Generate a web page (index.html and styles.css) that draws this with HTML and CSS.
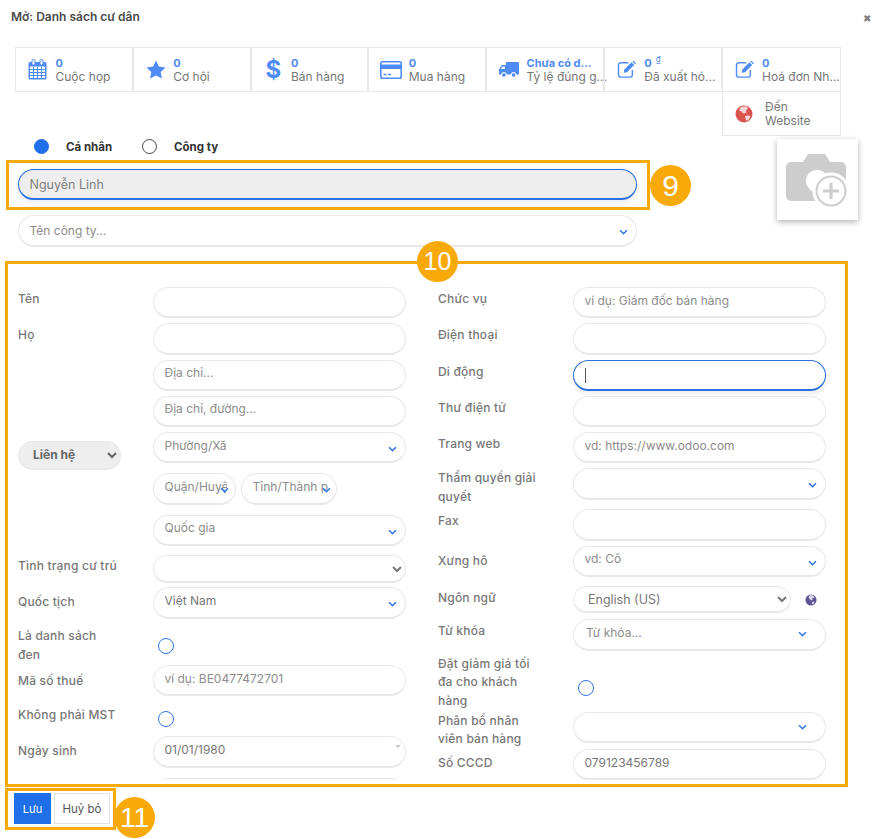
FILE: index.html
```html
<!DOCTYPE html>
<html lang="vi">
<head>
<meta charset="utf-8">
<title>Mở: Danh sách cư dân</title>
<link rel="stylesheet" href="styles.css">
</head>
<body>
<div class="modal">
  <header class="modal-head">
    <h4 class="modal-title">Mở: Danh sách cư dân</h4>
    <span class="close">✖</span>
  </header>

  <div class="stats">
    <div class="stat"><span class="stat-icon"><svg width="19" height="21" viewBox="0 0 19 21"><rect x=".5" y="3" width="18" height="17.5" rx="1.5" fill="#4f8bf5"/><rect x="2" y="7.5" width="15" height="11.5" fill="#fff"/><path d="M2 10.5h15M2 13.5h15M2 16.5h15M5.5 7.5V19M9.5 7.5V19M13.5 7.5V19" stroke="#4f8bf5" stroke-width="1"/><rect x="4" y=".5" width="3" height="5.5" rx="1.4" fill="#fff" stroke="#4f8bf5"/><rect x="12" y=".5" width="3" height="5.5" rx="1.4" fill="#fff" stroke="#4f8bf5"/></svg></span><div class="stat-text"><b>0</b><span>Cuộc họp</span></div></div>
    <div class="stat"><span class="stat-icon"><svg width="20" height="19" viewBox="0 0 20 19"><path d="M10 .5l2.9 6 6.6.9-4.8 4.6 1.2 6.5L10 15.4l-5.9 3.1 1.2-6.5L.5 7.4l6.6-.9z" fill="#4f8bf5"/></svg></span><div class="stat-text"><b>0</b><span>Cơ hội</span></div></div>
    <div class="stat"><span class="stat-icon"><span class="dollar">$</span></span><div class="stat-text"><b>0</b><span>Bán hàng</span></div></div>
    <div class="stat"><span class="stat-icon"><svg width="22" height="18" viewBox="0 0 22 18"><rect x=".8" y=".8" width="20.4" height="16.4" rx="1.8" fill="#fff" stroke="#4f8bf5" stroke-width="1.6"/><rect x="1" y="3.5" width="20" height="4.5" fill="#4f8bf5"/><path d="M3.5 13.5h3M8 13.5h3" stroke="#4f8bf5" stroke-width="1.6"/></svg></span><div class="stat-text"><b>0</b><span>Mua hàng</span></div></div>
    <div class="stat"><span class="stat-icon"><svg width="20" height="16" viewBox="0 0 20 16"><path d="M7 0h12a1 1 0 0 1 1 1v11.500h-2.500a3 3 0 0 0-5.800 0H7.800a3 3 0 0 0-5.800 0H0V7l3-4h4z" fill="#4f8bf5"/><path d="M1.700 7l2-2.500H6V7z" fill="#fff"/><circle cx="4.900" cy="13" r="2.300" fill="#4f8bf5" stroke="#fff"/><circle cx="14.600" cy="13" r="2.300" fill="#4f8bf5" stroke="#fff"/></svg></span><div class="stat-text"><b>Chưa có d...</b><span>Tỷ lệ đúng g...</span></div></div>
    <div class="stat"><span class="stat-icon"><svg class="edit" width="20" height="17" viewBox="0 1 21 19"><path d="M12 3H3.500A2.500 2.500 0 0 0 1 5.500v11A2.500 2.500 0 0 0 3.500 19h10.500a2.500 2.500 0 0 0 2.500-2.500V11" fill="none" stroke="#4f8bf5" stroke-width="1.600"/><path d="M7.500 10.500L15.500 2.500l3 3-8 8-3.700.7z" fill="#4f8bf5"/><path d="M16.500 1.500l1-1 3 3-1 1z" fill="#4f8bf5"/></svg></span><div class="stat-text"><b>0<sup class="cur">₫</sup></b><span>Đã xuất hó...</span></div></div>
    <div class="stat"><span class="stat-icon"><svg class="edit" width="20" height="17" viewBox="0 1 21 19"><path d="M12 3H3.500A2.500 2.500 0 0 0 1 5.500v11A2.500 2.500 0 0 0 3.500 19h10.500a2.500 2.500 0 0 0 2.500-2.500V11" fill="none" stroke="#4f8bf5" stroke-width="1.600"/><path d="M7.500 10.500L15.500 2.500l3 3-8 8-3.700.7z" fill="#4f8bf5"/><path d="M16.500 1.500l1-1 3 3-1 1z" fill="#4f8bf5"/></svg></span><div class="stat-text"><b>0</b><span>Hoá đơn Nh...</span></div></div>
    <div class="stat stat-web"><span class="stat-icon"><svg width="18" height="18" viewBox="0 0 18 18"><circle cx="9" cy="9" r="8.500" fill="#d9534f"/><path d="M6 1.500c2 .5 4-.3 6 .2l1 2-2 1.500.5 2-2.500 1.500-1.500-1-1.500-1.500-2-.5L5 3.500zM10 11l3-.5 2.500.5-1.500 3.500-2.500 1.500-1-2.500z" fill="#f5d5d3"/></svg></span><div class="stat-text wrap"><span>Đến Website</span></div></div>
  </div>

  <section class="identity">
    <div class="identity-main">
      <div class="kind">
        <span class="kind-opt"><i class="dot dot-on"></i><b>Cá nhân</b></span>
        <span class="kind-opt"><i class="dot"></i><b>Công ty</b></span>
      </div>
      <div class="field name-field"><input class="input input-name" value="Nguyễn Linh"></div>
      <div class="field"><input class="input input-company" placeholder="Tên công ty..."><svg class="chev" viewBox="0 0 10 7"><path d="M1 1.500l4 4 4-4" fill="none" stroke="#2f74e6" stroke-width="1.800"/></svg></div>
    </div>
    <div class="photo"><svg width="64" height="56" viewBox="0 0 64 56"><path d="M5 9h12l5-8h17l5 8h11a5 5 0 0 1 5 5v29a5 5 0 0 1-5 5H5a5 5 0 0 1-5-5V14a5 5 0 0 1 5-5z" fill="#cdcdcd"/><circle cx="31" cy="28" r="11" fill="#fff"/><circle cx="45" cy="38" r="17" fill="#cdcdcd" stroke="#fff" stroke-width="3"/><circle cx="45" cy="38" r="13.500" fill="#fff"/><path d="M45 30v16M37 38h16" stroke="#cdcdcd" stroke-width="3.200"/></svg></div>
  </section>

  <form class="form-scroll">
    <div class="col">
      <div class="row"><label>Tên</label><div class="field"><input class="input"></div></div>
      <div class="row"><label>Họ</label><div class="field"><input class="input"></div></div>
      <div class="row row-address">
        <div class="addr-type"><select class="select select-type"><option>Liên hệ</option></select></div>
        <div class="addr-fields">
          <div class="field"><input class="input" placeholder="Địa chỉ..."></div>
          <div class="field"><input class="input" placeholder="Địa chỉ, đường..."></div>
          <div class="field"><input class="input" placeholder="Phường/Xã"><svg class="chev" viewBox="0 0 10 7"><path d="M1 1.500l4 4 4-4" fill="none" stroke="#2f74e6" stroke-width="1.800"/></svg></div>
          <div class="addr-split">
            <div class="field district"><input class="input" placeholder="Quận/Huyện"><svg class="chev" viewBox="0 0 10 7"><path d="M1 1.500l4 4 4-4" fill="none" stroke="#2f74e6" stroke-width="1.800"/></svg></div>
            <div class="field city"><input class="input" placeholder="Tỉnh/Thành phố"><svg class="chev" viewBox="0 0 10 7"><path d="M1 1.500l4 4 4-4" fill="none" stroke="#2f74e6" stroke-width="1.800"/></svg></div>
          </div>
          <div class="field"><input class="input" placeholder="Quốc gia"><svg class="chev" viewBox="0 0 10 7"><path d="M1 1.500l4 4 4-4" fill="none" stroke="#2f74e6" stroke-width="1.800"/></svg></div>
        </div>
      </div>
      <div class="row row-status"><label>Tình trạng cư trú</label><select class="select select-status"><option></option></select></div>
      <div class="row row-nation"><label>Quốc tịch</label><div class="field"><input class="input" value="Việt Nam"><svg class="chev" viewBox="0 0 10 7"><path d="M1 1.500l4 4 4-4" fill="none" stroke="#2f74e6" stroke-width="1.800"/></svg></div></div>
      <div class="row row-check row-blacklist"><label>Là danh sách<br>đen</label><i class="check"></i></div>
      <div class="row row-tax"><label>Mã số thuế</label><div class="field"><input class="input" placeholder="ví dụ: BE0477472701"></div></div>
      <div class="row row-check row-nomst"><label>Không phải MST</label><i class="check"></i></div>
      <div class="row row-birth"><label>Ngày sinh</label><div class="field"><input class="input" value="01/01/1980"><i class="spin"></i></div></div>
      <div class="row"><label></label><div class="field"><input class="input"></div></div>
    </div>

    <div class="col">
      <div class="row"><label>Chức vụ</label><div class="field"><input class="input" placeholder="ví dụ: Giám đốc bán hàng"></div></div>
      <div class="row"><label>Điện thoại</label><div class="field"><input class="input"></div></div>
      <div class="row"><label>Di động</label><div class="field"><input class="input input-focus"><i class="caret"></i></div></div>
      <div class="row"><label>Thư điện tử</label><div class="field"><input class="input"></div></div>
      <div class="row"><label>Trang web</label><div class="field"><input class="input" placeholder="vd: https://www.odoo.com"></div></div>
      <div class="row row-juris"><label>Thẩm quyền giải<br>quyết</label><div class="field"><input class="input"><svg class="chev" viewBox="0 0 10 7"><path d="M1 1.500l4 4 4-4" fill="none" stroke="#2f74e6" stroke-width="1.800"/></svg></div></div>
      <div class="row"><label>Fax</label><div class="field"><input class="input"></div></div>
      <div class="row row-title"><label>Xưng hô</label><div class="field"><input class="input" placeholder="vd: Cô"><svg class="chev" viewBox="0 0 10 7"><path d="M1 1.500l4 4 4-4" fill="none" stroke="#2f74e6" stroke-width="1.800"/></svg></div></div>
      <div class="row row-lang"><label>Ngôn ngữ</label><div class="lang"><select class="select select-lang"><option>English (US)</option></select><svg class="lang-globe" width="12" height="12" viewBox="0 0 12 12"><circle cx="6" cy="6" r="5.500" fill="#5f5596"/><path d="M5 1l3 .500 1.500 2-2 1-.5 2-2-1-1.500-2zM7 8l2.500-.5-1 3L7 10z" fill="#d9d6e8"/></svg></div></div>
      <div class="row row-tags"><label>Từ khóa</label><div class="field"><input class="input input-tags" placeholder="Từ khóa..."><svg class="chev chev-in" viewBox="0 0 10 7"><path d="M1 1.500l4 4 4-4" fill="none" stroke="#2f74e6" stroke-width="1.800"/></svg></div></div>
      <div class="row row-check row-discount"><label>Đặt giảm giá tối<br>đa cho khách<br>hàng</label><i class="check"></i></div>
      <div class="row row-sales"><label>Phân bổ nhân<br>viên bán hàng</label><div class="field"><input class="input"><svg class="chev chev-in" viewBox="0 0 10 7"><path d="M1 1.500l4 4 4-4" fill="none" stroke="#2f74e6" stroke-width="1.800"/></svg></div></div>
      <div class="row row-id"><label>Số CCCD</label><div class="field"><input class="input" value="079123456789"></div></div>
    </div>
  </form>

  <footer class="actions">
    <button class="btn btn-save" type="button">Lưu</button>
    <button class="btn btn-cancel" type="button">Huỷ bỏ</button>
  </footer>
</div>

<div class="frame frame-name"></div>
<div class="frame frame-form"></div>
<div class="frame frame-actions"></div>
<span class="badge badge-name">9</span>
<span class="badge badge-form">10</span>
<span class="badge badge-actions">11</span>
</body>
</html>
```

FILE: styles.css
```css
* { box-sizing: border-box; }
html, body { margin: 0; padding: 0; background: #fff; }
body {
  position: relative;
  width: 876px;
  height: 839px;
  overflow: hidden;
  font-family: Inter, "Open Sans", sans-serif;
  font-size: 12px;
  color: #6f6f6f;
}

.modal-head {
  height: 47px;
  display: flex;
  justify-content: space-between;
  padding: 9px 5px 0 11px;
}
.modal-title {
  margin: 0;
  font-size: 12px;
  font-weight: 600;
  line-height: 15px;
  color: #4a4a4a;
}
.close {
  font-size: 10px;
  color: #808080;
  line-height: 18px;
}

.stats {
  margin-left: 15px;
  display: grid;
  grid-template-columns: repeat(6, 117.75px) 119.5px;
  grid-template-rows: 45px 44px;
}
.stat {
  display: flex;
  align-items: center;
  border: 1px solid #e8e8e8;
  min-width: 0;
}
.stat-web { grid-column: 7; border-top: 0; }
.stat-icon {
  flex: 0 0 39.5px;
  padding-left: 4px;
  display: flex;
  justify-content: center;
  align-items: center;
}
.edit { margin-left: 1px; }
.dollar {
  font-size: 24px;
  font-weight: 700;
  line-height: 30px;
  color: #4f8bf5;
}
.stat-text {
  display: flex;
  flex-direction: column;
  line-height: 14px;
  color: #777;
  white-space: nowrap;
}
.stat-text b {
  font-size: 11px;
  font-weight: 700;
  color: #4f8bf5;
}
.stat-text.wrap { width: 62px; padding-left: 3px; white-space: normal; }
.cur { font-size: 8px; font-weight: 400; margin-left: 4px; line-height: 0; }

.identity {
  display: flex;
  margin-top: 3px;
  padding-left: 18px;
}
.identity-main { width: 619px; }
.kind {
  height: 30px;
  display: flex;
  padding: 0 0 0 16px;
  align-items: flex-start;
}
.kind-opt {
  display: flex;
  align-items: center;
  width: 108px;
  height: 15px;
}
.kind-opt b {
  margin-left: 17px;
  font-size: 11.5px;
  font-weight: 700;
  color: #333;
}
.dot {
  flex: none;
  width: 15px;
  height: 15px;
  border-radius: 50%;
  border: 1px solid #444;
}
.dot-on { background: #1f6fec; border-color: #1f6fec; }
.name-field { margin-bottom: 15px; }
.photo {
  width: 81px;
  height: 81px;
  margin-left: 140px;
  box-shadow: 0 2px 6px rgba(0, 0, 0, .3);
  display: flex;
  align-items: center;
  justify-content: center;
  padding-top: 3px;
}

.field { position: relative; }
.input {
  display: block;
  width: 100%;
  height: 31.25px;
  padding: 0 8px 4px 10.5px;
  border: 1px solid #e8e8e8;
  border-bottom-width: 2px;
  border-radius: 16px;
  background: #fff;
  font: 400 12px Inter, "Open Sans", sans-serif;
  color: #777;
  outline: none;
}
.input::placeholder { color: #8c8c8c; opacity: 1; }
.input-name {
  padding-bottom: 0;
  background: #eee;
  border-color: #2b6fe0;
  font-size: 12.5px;
  color: #808080;
  box-shadow: 0 3px 6px rgba(0, 0, 0, .08);
}
.input-company { padding-bottom: 0; }
.input-focus {
  border-color: #2b6fe0;
  box-shadow: 0 3px 6px rgba(0, 0, 0, .08);
}
.caret {
  position: absolute;
  left: 12px;
  top: 8px;
  width: 1px;
  height: 15px;
  background: #555;
}
.chev {
  position: absolute;
  right: 9px;
  top: 14px;
  width: 9px;
  height: 6px;
}
.chev-in { right: 19.5px; top: 11.5px; }
.spin {
  position: absolute;
  right: 5px;
  top: 9px;
  border: 3px solid transparent;
  border-top-color: #c8c8c8;
  border-bottom: 0;
}

.select {
  display: block;
  width: 100%;
  border: 1px solid #e8e8e8;
  border-bottom-width: 2px;
  border-radius: 16px;
  background-color: #fff;
  font: 400 12px Inter, "Open Sans", sans-serif;
  color: #777;
  outline: none;
}
.select-type {
  height: 29px;
  padding: 0 5px 0 10px;
  background: #eee;
  font-weight: 700;
  color: #666;
}
.select-status { height: 28px; padding: 0 5px 0 14px; }
.select-lang { width: 218px; height: 27px; padding: 0 5px 0 10px; font-size: 12.5px; }

.form-scroll {
  margin-top: 17.5px;
  height: 516px;
  padding: 23px 50px 0 18px;
  overflow: hidden;
  display: grid;
  grid-template-columns: 388px 388px;
  column-gap: 32px;
  align-items: start;
}
.row {
  display: grid;
  grid-template-columns: 135px 1fr;
  margin-bottom: 5px;
}
.row > label {
  padding: 3px 0 0;
  font-weight: 500;
  line-height: 18.75px;
  letter-spacing: .2px;
  color: #777;
}

.row-address { align-items: center; margin-bottom: 9px; }
.addr-type { width: 103px; padding-top: 5px; }
.addr-fields { display: flex; flex-direction: column; gap: 5px; }
.addr-split { display: flex; gap: 5px; margin: 5px 0; }
.district { width: 83px; }
.city { width: 96px; }
.district .chev { right: 7.5px; }
.city .chev { right: 6.5px; }
.row-status { margin-bottom: 4.5px; }
.row-status > label { padding-top: 2px; }
.row-nation { margin-bottom: 8.5px; }
.row-nation > label { padding-top: 5.5px; }
.row-tax { margin-bottom: 9px; }
.row-tax > label { padding-top: 6.5px; }

.row-check { align-items: center; }
.row-check > label { padding-top: 0; }
.check {
  display: block;
  width: 16px;
  height: 16px;
  margin-left: 5px;
  border-radius: 50%;
  border: 1px solid #2f74e6;
}
.row-blacklist { height: 38px; margin-bottom: 0; }
.row-nomst { height: 30px; margin-bottom: 1px; }
.row-nomst > label { margin-top: -10px; }
.row-nomst .check { margin-top: -2px; }
.row-birth { margin-bottom: 10.5px; }
.row-birth > label { padding-top: 5.5px; }

.row-juris { margin-bottom: 2.5px; }
.row-juris > label { padding-top: 1px; }
.row-title { margin-bottom: 9.5px; }
.row-title > label { padding-top: 6.5px; }
.row-lang { margin-bottom: 6px; }
.row-lang > label { padding-top: 3px; }
.lang { display: flex; align-items: center; }
.lang-globe { margin-left: 14px; }
.row-tags { margin-bottom: 4px; }
.input-tags { padding-left: 12px; }
.row-discount { height: 56.25px; margin-bottom: 1.25px; }
.row-discount .check { margin-top: 11px; }
.row-sales { height: 35px; margin-bottom: 2px; }
.row-sales > label { padding-top: 0; line-height: 17.5px; }
.row-id > label { padding-top: 4.5px; }

.actions {
  display: flex;
  gap: 3px;
  padding: 13px 0 0 14px;
}
.btn {
  height: 31px;
  padding: 0;
  font: 400 11.5px Inter, "Open Sans", sans-serif;
}
.btn-save {
  width: 37px;
  border: 0;
  background: #1f6fe8;
  color: #fff;
  font-size: 11px;
}
.btn-cancel {
  width: 56px;
  border: 1px solid #e2e2e2;
  background: #fff;
  color: #555;
}

.frame {
  position: absolute;
  border: 3px solid #f9aa0b;
}
.frame-name { left: 6px; top: 160px; width: 644px; height: 50px; }
.frame-form { left: 5px; top: 261px; width: 843px; height: 526px; }
.frame-actions { left: 5px; top: 788px; width: 111px; height: 42px; }

.badge {
  position: absolute;
  width: 41px;
  height: 41px;
  border-radius: 50%;
  background: #f9aa0b;
  color: #fff;
  font-family: "Liberation Sans", Arial, sans-serif;
  display: flex;
  align-items: center;
  justify-content: center;
}
.badge-name { left: 650px; top: 165px; font-size: 30px; }
.badge-form { left: 417px; top: 241px; font-size: 25px; }
.badge-actions { left: 114px; top: 797px; font-size: 28px; }
```
